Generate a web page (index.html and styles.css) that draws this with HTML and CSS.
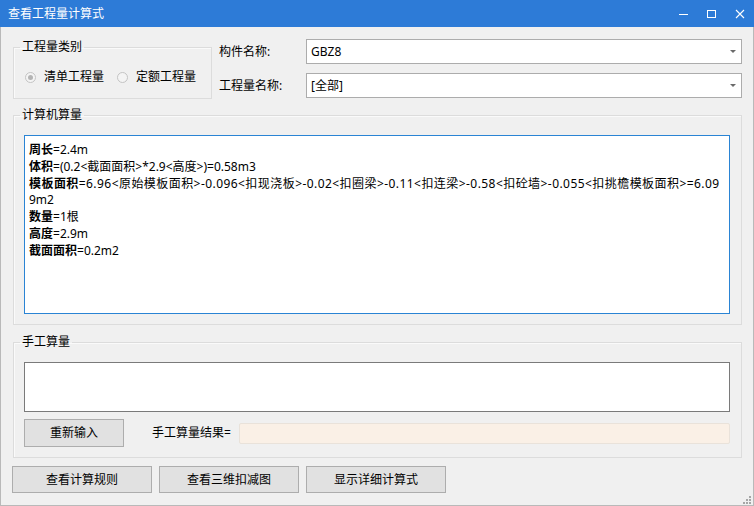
FILE: index.html
```html
<!DOCTYPE html>
<html lang="zh-CN">
<head>
<meta charset="utf-8">
<title>查看工程量计算式</title>
<link rel="stylesheet" href="styles.css">
</head>
<body>
<div class="window">
  <div class="titlebar">
    <span class="title">查看工程量计算式</span>
    <div class="ctrls">
      <span class="ctrl"><svg width="10" height="10" viewBox="0 0 10 10"><path d="M0 5.5H9" stroke="#fff" stroke-width="1"/></svg></span>
      <span class="ctrl"><svg width="10" height="10" viewBox="0 0 10 10"><rect x="0.5" y="1.5" width="8" height="7" fill="none" stroke="#fff" stroke-width="1"/></svg></span>
      <span class="ctrl"><svg width="10" height="10" viewBox="0 0 10 10"><path d="M1 1L9 9M9 1L1 9" stroke="#fff" stroke-width="1.1"/></svg></span>
    </div>
  </div>
  <div class="frame">
    <div class="row1">
      <fieldset class="gb gb-type">
        <legend>工程量类别</legend>
        <div class="radios">
          <span class="radio-item"><span class="radio checked"></span>清单工程量</span>
          <span class="radio-item"><span class="radio"></span>定额工程量</span>
        </div>
      </fieldset>
      <div class="fields">
        <span class="flabel">构件名称:</span>
        <div class="combo"><span>GBZ8</span><i class="arrow"></i></div>
        <span class="flabel">工程量名称:</span>
        <div class="combo"><span>[全部]</span><i class="arrow"></i></div>
      </div>
    </div>

    <fieldset class="gb gb-calc">
      <legend>计算机算量</legend>
      <div class="gb-body">
        <div class="textbox calc">
          <div class="line"><b>周长</b>=2.4m</div>
          <div class="line"><b>体积</b>=(0.2&lt;截面面积&gt;*2.9&lt;高度&gt;)=0.58m3</div>
          <div class="line line-long"><b>模板面积</b>=6.96&lt;原始模板面积&gt;-0.096&lt;扣现浇板&gt;-0.02&lt;扣圈梁&gt;-0.11&lt;扣连梁&gt;-0.58&lt;扣砼墙&gt;-0.055&lt;扣挑檐模板面积&gt;=6.09</div>
          <div class="line">9m2</div>
          <div class="line"><b>数量</b>=1根</div>
          <div class="line"><b>高度</b>=2.9m</div>
          <div class="line"><b>截面面积</b>=0.2m2</div>
        </div>
      </div>
    </fieldset>

    <fieldset class="gb gb-manual">
      <legend>手工算量</legend>
      <div class="gb-body">
        <div class="textbox manual"></div>
        <div class="manual-row">
          <button class="btn btn-reset">重新输入</button>
          <span class="result-label">手工算量结果=</span>
          <div class="result"></div>
        </div>
      </div>
    </fieldset>

    <div class="actions">
      <button class="btn btn-action">查看计算规则</button>
      <button class="btn btn-action">查看三维扣减图</button>
      <button class="btn btn-action">显示详细计算式</button>
    </div>

    <svg class="grip" width="9" height="9" viewBox="0 0 9 9">
      <rect x="7" y="1" width="2" height="2" fill="#a6a6a6"/>
      <rect x="4" y="4" width="2" height="2" fill="#a6a6a6"/>
      <rect x="7" y="4" width="2" height="2" fill="#a6a6a6"/>
      <rect x="1" y="7" width="2" height="2" fill="#a6a6a6"/>
      <rect x="4" y="7" width="2" height="2" fill="#a6a6a6"/>
      <rect x="7" y="7" width="2" height="2" fill="#a6a6a6"/>
    </svg>
  </div>
</div>
</body>
</html>
```

FILE: styles.css
```css
* { box-sizing: border-box; }

html, body {
  margin: 0;
  padding: 0;
  background: #f0f0f0;
}

body {
  font-family: "Noto Sans", "Noto Sans CJK SC", sans-serif;
  font-size: 12px;
  color: #000;
}

.window {
  width: 754px;
  height: 506px;
  display: flex;
  flex-direction: column;
}

.titlebar {
  height: 27px;
  flex: none;
  background: #2d7bd7;
  display: flex;
  align-items: center;
  padding-left: 8px;
  color: #fff;
}

.title {
  font-size: 12px;
  line-height: 12px;
}

.ctrls {
  margin-left: auto;
  display: flex;
  height: 100%;
}

.ctrl {
  width: 28px;
  height: 27px;
  display: flex;
  align-items: center;
  justify-content: center;
}

.ctrl svg { display: block; }

.frame {
  position: relative;
  flex: 1;
  background: #f0f0f0;
  border: 1px solid #b9b9b9;
  border-top: none;
  padding: 12px 11px 12px 12px;
  display: flex;
  flex-direction: column;
}

/* group boxes */
.gb {
  margin: 0;
  padding: 0;
  min-width: 0;
  border: 1px solid #dcdcdc;
  box-shadow: inset 1px 1px 0 #fafafa;
}

.gb legend {
  font-size: 12px;
  line-height: 12px;
  padding: 0 2px;
  margin-left: 6px;
  color: #000;
}

.row1 {
  display: flex;
  align-items: flex-start;
  height: 60px;
  flex: none;
}

.gb-type {
  width: 199px;
  margin-top: 2px;
  flex: none;
}

.radios {
  display: flex;
  align-items: center;
  height: 16px;
  margin: 16px 0 13px 11px;
}

.radio-item {
  display: flex;
  align-items: center;
  gap: 8px;
  line-height: 16px;
}

.radio-item + .radio-item { margin-left: 13px; }

.radio {
  width: 11px;
  height: 11px;
  border-radius: 50%;
  border: 1px solid #c4c4c4;
  background: #f4f4f4;
  display: flex;
  align-items: center;
  justify-content: center;
}

.radio.checked::after {
  content: "";
  width: 5px;
  height: 5px;
  border-radius: 50%;
  background: #b4b4b4;
}

.fields {
  flex: 1;
  margin-left: 7px;
  display: grid;
  grid-template-columns: 87px 1fr;
  grid-template-rows: 25px 25px;
  row-gap: 9px;
}

.flabel {
  align-self: center;
  line-height: 14px;
}

.combo {
  background: #fff;
  border: 1px solid #acacac;
  display: flex;
  align-items: center;
  padding: 0 5px 0 4px;
  line-height: 14px;
}

.arrow {
  margin-left: auto;
  width: 0;
  height: 0;
  border-left: 3px solid transparent;
  border-right: 3px solid transparent;
  border-top: 3px solid #6a6a6a;
}

.gb-calc {
  margin-top: 10px;
  flex: none;
}

.gb-body {
  padding: 14px 11px 10px 10px;
}

.textbox {
  background: #fff;
}

.calc {
  height: 179px;
  border: 1px solid #2a84d4;
  padding: 6px 4px;
  line-height: 16.8px;
  overflow: hidden;
}

.line {
  white-space: nowrap;
}

.line-long {
  letter-spacing: 0.44px;
}

.line b { font-weight: 700; }

.gb-manual {
  margin-top: 11px;
  flex: none;
}

.manual {
  height: 50px;
  border: 1px solid #7a7a7a;
}

.manual-row {
  margin-top: 7px;
  display: flex;
  align-items: center;
  height: 28px;
}

.btn {
  font-family: inherit;
  font-size: 12px;
  color: #000;
  background: #e1e1e1;
  border: 1px solid #adadad;
  padding: 0;
  margin: 0;
  line-height: 14px;
}

.btn-reset {
  width: 100px;
  height: 28px;
}

.result-label {
  margin-left: 28px;
  width: 87px;
  line-height: 14px;
}

.result {
  flex: 1;
  height: 21px;
  background: #faf0e6;
  border: 1px solid #e9e2da;
  border-radius: 2px;
}

.actions {
  margin-top: 8px;
  margin-left: -1px;
  display: flex;
  gap: 7px;
}

.btn-action {
  width: 140px;
  height: 27px;
}

.grip {
  position: absolute;
  right: 2px;
  bottom: 1px;
  display: block;
}
```
